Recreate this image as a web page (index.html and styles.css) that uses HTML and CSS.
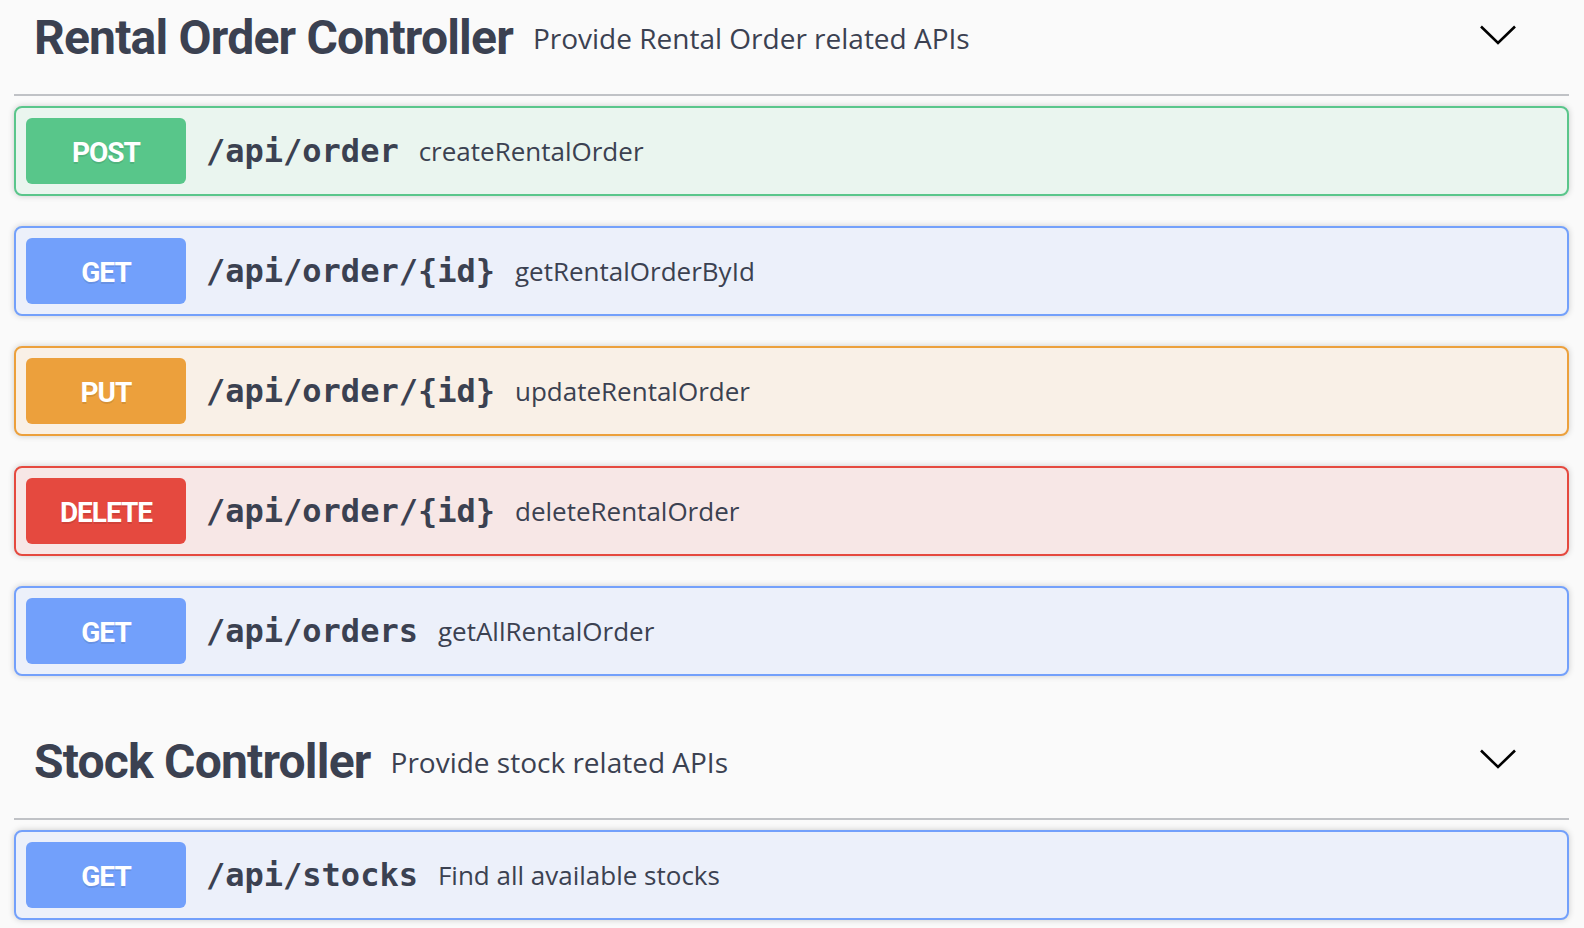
FILE: index.html
```html
<!DOCTYPE html>
<html lang="en">
<head>
<meta charset="utf-8">
<title>Swagger UI</title>
<link rel="stylesheet" href="styles.css">
</head>
<body>
<div class="page">
  <section class="tag-section">
    <h3 class="tag">
      <span class="tag-name">Rental Order Controller</span>
      <small class="tag-desc">Provide Rental Order related APIs</small>
      <button class="expand" aria-label="Collapse">
        <svg width="40" height="40" viewBox="0 0 40 40"><polyline points="3,8.5 20,25 37,8.5" fill="none" stroke="#000" stroke-width="2.6"/></svg>
      </button>
    </h3>
    <div class="ops">
      <div class="op op-post">
        <div class="summary"><span class="method">POST</span><span class="path">/api/order</span><span class="desc">createRentalOrder</span></div>
      </div>
      <div class="op op-get">
        <div class="summary"><span class="method">GET</span><span class="path">/api/order/{id}</span><span class="desc">getRentalOrderById</span></div>
      </div>
      <div class="op op-put">
        <div class="summary"><span class="method">PUT</span><span class="path">/api/order/{id}</span><span class="desc">updateRentalOrder</span></div>
      </div>
      <div class="op op-delete">
        <div class="summary"><span class="method">DELETE</span><span class="path">/api/order/{id}</span><span class="desc">deleteRentalOrder</span></div>
      </div>
      <div class="op op-get">
        <div class="summary"><span class="method">GET</span><span class="path">/api/orders</span><span class="desc">getAllRentalOrder</span></div>
      </div>
    </div>
  </section>
  <section class="tag-section">
    <h3 class="tag">
      <span class="tag-name">Stock Controller</span>
      <small class="tag-desc">Provide stock related APIs</small>
      <button class="expand" aria-label="Collapse">
        <svg width="40" height="40" viewBox="0 0 40 40"><polyline points="3,8.5 20,25 37,8.5" fill="none" stroke="#000" stroke-width="2.6"/></svg>
      </button>
    </h3>
    <div class="ops">
      <div class="op op-get">
        <div class="summary"><span class="method">GET</span><span class="path">/api/stocks</span><span class="desc">Find all available stocks</span></div>
      </div>
    </div>
  </section>
</div>
</body>
</html>
```

FILE: styles.css
```css
html, body {
  margin: 0;
  padding: 0;
  background: #fafafa;
  color: #3b4151;
  font-family: "Open Sans", sans-serif;
}

.page {
  margin-top: -18px;
  padding: 0 15px 0 14px;
}

.tag {
  display: flex;
  align-items: center;
  margin: 0 0 10px;
  padding: 20px 51px 20px 20px;
  border-bottom: 2px solid rgba(59, 65, 81, 0.3);
  font-weight: 400;
}

.tag-name {
  font-family: Roboto, "Open Sans", sans-serif;
  font-weight: 700;
  font-size: 48px;
  line-height: 72px;
  letter-spacing: -0.8px;
  color: #3b4151;
}

.tag-desc {
  flex: 1;
  padding: 0 20px;
  font-family: "Open Sans", sans-serif;
  font-size: 28px;
  font-weight: 400;
  color: #3b4151;
}

.expand {
  display: block;
  width: 40px;
  height: 40px;
  padding: 0;
  border: 0;
  background: none;
}

.expand svg {
  display: block;
}

.op {
  margin: 0 0 30px;
  border: 2px solid;
  border-radius: 8px;
  box-shadow: 0 0 6px rgba(0, 0, 0, 0.19);
}

.summary {
  display: flex;
  align-items: center;
  padding: 10px;
}

.method {
  min-width: 160px;
  padding: 14px 0 10px;
  border-radius: 6px;
  text-align: center;
  font-family: Roboto, "Open Sans", sans-serif;
  font-weight: 700;
  font-size: 28px;
  line-height: 42px;
  letter-spacing: -1px;
  color: #fff;
  text-shadow: 0 2px 0 rgba(0, 0, 0, 0.1);
}

.path {
  padding: 0 20px;
  font-family: "DejaVu Sans Mono", monospace;
  font-weight: 700;
  font-size: 32px;
  color: #3b4151;
}

.desc {
  font-family: "Open Sans", sans-serif;
  font-size: 26px;
  color: #3b4151;
}

.op-post { background: #eaf5ef; border-color: #5ac68b; }
.op-post .method { background: #58c68a; }

.op-get { background: #ecf0fa; border-color: #73a0fb; }
.op-get .method { background: #72a0fb; }

.op-put { background: #f9f0e7; border-color: #eca03c; }
.op-put .method { background: #eca03c; }

.op-delete { background: #f7e7e6; border-color: #e5493f; }
.op-delete .method { background: #e5493f; }
```
